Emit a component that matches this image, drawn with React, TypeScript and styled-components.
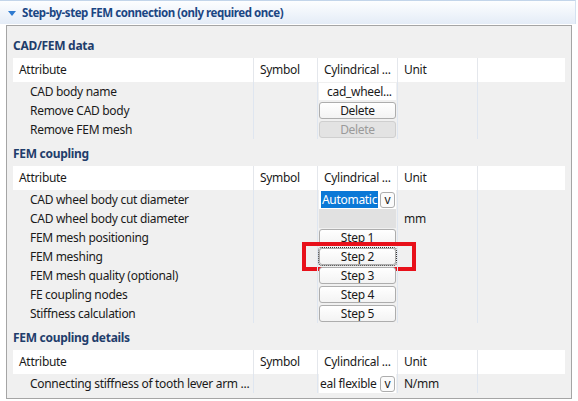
import React from 'react';
import styled, { createGlobalStyle } from 'styled-components';

const Global = createGlobalStyle`
  html, body {
    margin: 0;
    padding: 0;
    background: #ffffff;
  }
  body {
    font-family: 'Noto Sans', 'Open Sans', sans-serif;
    font-size: 12px;
    letter-spacing: -0.3px;
    color: #1a1a1a;
  }
`;

const COLS = '240px 64px 80px 80px 88px';

const Page = styled.div`
  width: 578px;
  height: 401px;
  overflow: hidden;
  background: #ffffff;
`;

const TitleBar = styled.div`
  height: 24px;
  width: 576px;
  box-sizing: border-box;
  border-top: 1px solid #c3d5ea;
  border-right: 1px solid #d4e1f0;
  background: linear-gradient(#fdfeff, #e4ecf7);
  display: flex;
  align-items: center;
  gap: 6px;
  padding-left: 8px;
  font-weight: 700;
  font-size: 11.5px;
  letter-spacing: -0.45px;
  color: #1b4683;
`;

const Caret = styled.span`
  width: 0;
  height: 0;
  border-left: 4px solid transparent;
  border-right: 4px solid transparent;
  border-top: 5px solid #2f7bd0;
  margin-top: 1px;
`;

const Panel = styled.div`
  margin: 1px 0 0 6px;
  width: 566px;
  box-sizing: border-box;
  border: 1px solid #a5a5a5;
  background: #f0f0f0;
  padding: 5px 6px 5px 6px;
`;

const Heading = styled.div`
  height: 27px;
  box-sizing: border-box;
  padding-top: 6px;
  line-height: 18px;
  font-weight: 700;
  color: #1f3d6b;
`;

const Table = styled.div`
  display: grid;
  grid-template-columns: ${COLS};
`;

const HeadCell = styled.div`
  height: 24px;
  line-height: 24px;
  background: #ffffff;
  padding-left: 6px;
  box-sizing: border-box;
  white-space: nowrap;
  overflow: hidden;
  & + & {
    border-left: 1px solid #e4e7ec;
  }
`;

const Cell = styled.div<{ $indent?: boolean; $first?: boolean }>`
  position: relative;
  height: 19px;
  line-height: 19px;
  box-sizing: border-box;
  white-space: nowrap;
  padding-left: ${({ $indent }) => ($indent ? '17px' : '6px')};
  border-left: ${({ $first }) => ($first ? 'none' : '1px solid #dfe6f0')};
`;

const ValueCell = styled(Cell)`
  padding: 0 1px 0 1px;
  display: flex;
  align-items: center;
`;

const TextValue = styled.div`
  flex: 1;
  height: 17px;
  line-height: 17px;
  background: #ffffff;
  padding-left: 8px;
`;

const Disabled = styled.div`
  flex: 1;
  height: 19px;
  background: #e1e1e1;
`;

const Button = styled.button<{ $disabled?: boolean; $focus?: boolean }>`
  flex: 1;
  height: 17px;
  margin: 0;
  padding: 0;
  font: inherit;
  letter-spacing: inherit;
  line-height: 15px;
  color: ${({ $disabled }) => ($disabled ? '#9a9a9a' : '#1a1a1a')};
  border: 1px solid ${({ $disabled }) => ($disabled ? '#cfcfcf' : '#adadad')};
  border-radius: 3px;
  background: ${({ $disabled }) =>
    $disabled ? '#e3e3e3' : 'linear-gradient(#ffffff, #f3f3f3)'};
  outline: ${({ $focus }) => ($focus ? '1px dotted #333' : 'none')};
  outline-offset: 0;
`;

const Select = styled.div`
  flex: 1;
  display: flex;
  align-items: center;
  height: 19px;
  background: #ffffff;
  overflow: hidden;
`;

const SelectText = styled.span<{ $selected?: boolean }>`
  flex: 1;
  min-width: 0;
  overflow: hidden;
  white-space: nowrap;
  height: 17px;
  line-height: 17px;
  padding-left: ${({ $selected }) => ($selected ? '2px' : '1px')};
  span {
    background: ${({ $selected }) => ($selected ? '#0a78d6' : 'transparent')};
    color: ${({ $selected }) => ($selected ? '#ffffff' : '#1a1a1a')};
    padding: ${({ $selected }) => ($selected ? '0 1px' : '0')};
  }
`;

const Arrow = styled.span`
  flex: none;
  width: 15px;
  height: 16px;
  line-height: 14px;
  text-align: center;
  border: 1px solid #adadad;
  border-radius: 3px;
  box-sizing: border-box;
  background: #fbfbfb;
  margin: 0 1px 0 2px;
`;

const Highlight = styled.div`
  position: absolute;
  left: -16px;
  top: -5px;
  width: 114px;
  height: 29px;
  box-sizing: border-box;
  border: 4px solid #e8101a;
  pointer-events: none;
`;

type Row = {
  label: string;
  value: React.ReactNode;
  unit?: string;
};

function Header() {
  return (
    <>
      <HeadCell>Attribute</HeadCell>
      <HeadCell>Symbol</HeadCell>
      <HeadCell>Cylindrical ...</HeadCell>
      <HeadCell>Unit</HeadCell>
      <HeadCell />
    </>
  );
}

function Section({ title, rows }: { title: string; rows: Row[] }) {
  return (
    <>
      <Heading>{title}</Heading>
      <Table>
        <Header />
        {rows.map((r, i) => (
          <React.Fragment key={i}>
            <Cell $indent $first>{r.label}</Cell>
            <Cell />
            <ValueCell>{r.value}</ValueCell>
            <Cell>{r.unit}</Cell>
            <Cell />
          </React.Fragment>
        ))}
      </Table>
    </>
  );
}

const cadRows: Row[] = [
  { label: 'CAD body name', value: <TextValue>cad_wheel...</TextValue> },
  { label: 'Remove CAD body', value: <Button>Delete</Button> },
  { label: 'Remove FEM mesh', value: <Button $disabled>Delete</Button> },
];

const couplingRows: Row[] = [
  {
    label: 'CAD wheel body cut diameter',
    value: (
      <Select>
        <SelectText $selected>
          <span>Automatic</span>
        </SelectText>
        <Arrow>v</Arrow>
      </Select>
    ),
  },
  { label: 'CAD wheel body cut diameter', value: <Disabled />, unit: 'mm' },
  { label: 'FEM mesh positioning', value: <Button>Step 1</Button> },
  {
    label: 'FEM meshing',
    value: (
      <>
        <Button $focus>Step 2</Button>
        <Highlight />
      </>
    ),
  },
  { label: 'FEM mesh quality (optional)', value: <Button>Step 3</Button> },
  { label: 'FE coupling nodes', value: <Button>Step 4</Button> },
  { label: 'Stiffness calculation', value: <Button>Step 5</Button> },
];

const detailRows: Row[] = [
  {
    label: 'Connecting stiffness of tooth lever arm ...',
    value: (
      <Select>
        <SelectText>
          <span>eal flexible</span>
        </SelectText>
        <Arrow>v</Arrow>
      </Select>
    ),
    unit: 'N/mm',
  },
];

export default function App() {
  return (
    <Page>
      <Global />
      <TitleBar>
        <Caret />
        Step-by-step FEM connection (only required once)
      </TitleBar>
      <Panel>
        <Section title="CAD/FEM data" rows={cadRows} />
        <Section title="FEM coupling" rows={couplingRows} />
        <Section title="FEM coupling details" rows={detailRows} />
      </Panel>
    </Page>
  );
}
